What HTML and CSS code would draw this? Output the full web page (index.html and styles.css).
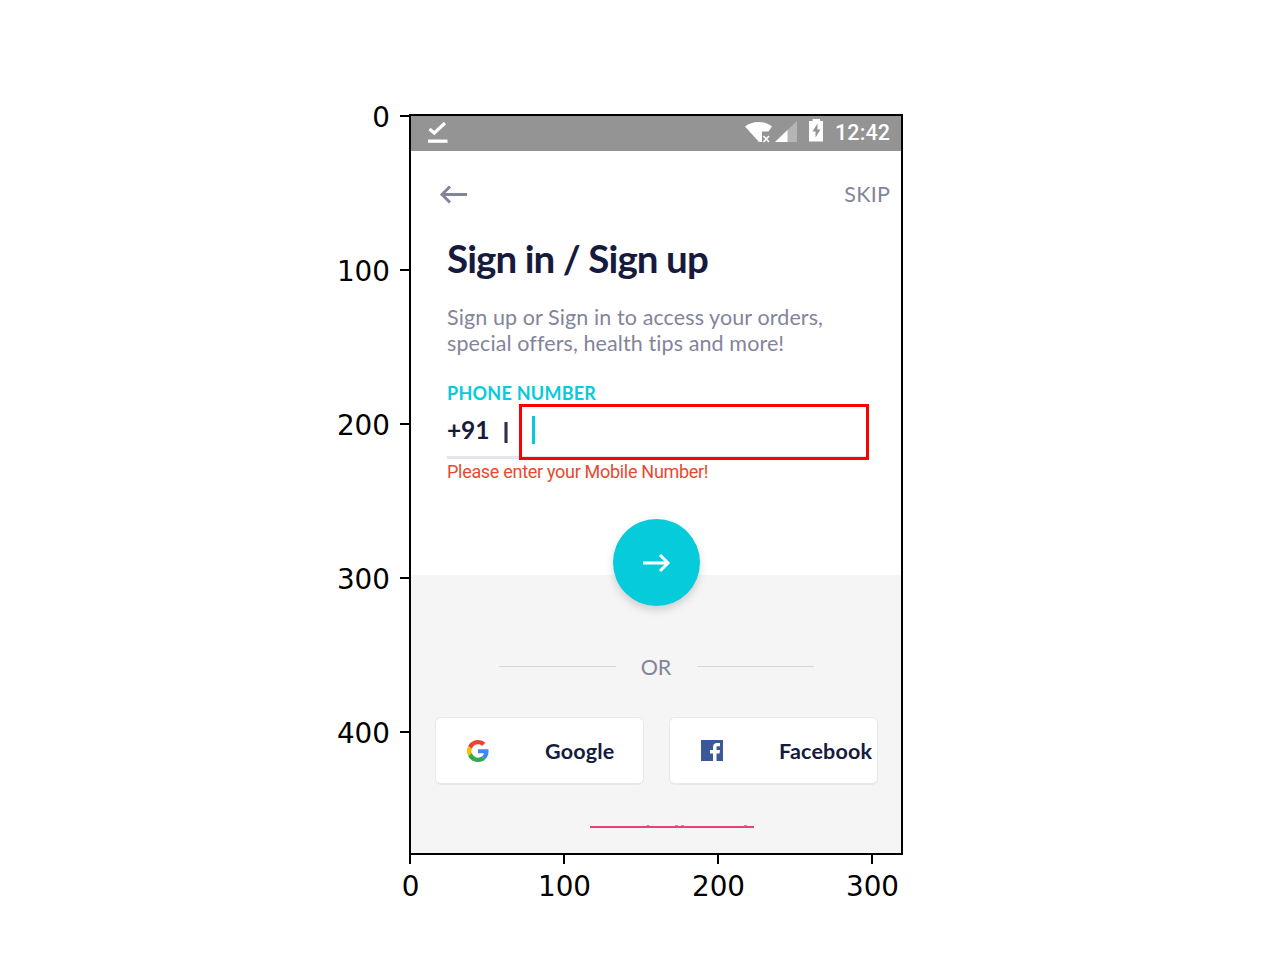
FILE: index.html
```html
<!DOCTYPE html>
<html lang="en">
<head>
<meta charset="utf-8">
<title>Sign in / Sign up</title>
<link rel="stylesheet" href="styles.css">
</head>
<body>
<main class="figure">
  <div class="y-axis">
    <div class="y-tick"><span>0</span></div>
    <div class="y-tick"><span>100</span></div>
    <div class="y-tick"><span>200</span></div>
    <div class="y-tick"><span>300</span></div>
    <div class="y-tick"><span>400</span></div>
  </div>
  <section class="screen">
    <header class="status">
      <svg class="status-check" width="22" height="24" viewBox="0 0 22 24"><path d="M2.500 9 7.300 13 18 3" fill="none" stroke="#fff" stroke-width="3.200"/><path d="M1 19.500h19.500v3.300H1z" fill="#fff"/></svg>
      <svg class="status-icons" width="82" height="26" viewBox="0 0 82 26">
        <path d="M0 8.500C7 2.500 20 2.500 27 8.500L23.500 13.500H17V24H14Z" fill="#fff"/>
        <path d="m18.500 18 5.500 6m0-6-5.500 6" stroke="#fff" stroke-width="1.700"/>
        <path d="M52 3v21H30Z" fill="#b5b5b5"/><path d="M42.500 12.100V24H30Z" fill="#fff"/>
        <path d="M64 3h3.500V1h7.500v2h3V23.500H64Z" fill="#fff"/>
        <path d="m72.500 5.500-5 8h3v6l5-8h-3Z" fill="#949494"/>
      </svg>
      <span class="clock">12:42</span>
    </header>
    <nav class="nav">
      <svg width="30" height="20" viewBox="0 0 30 20"><path d="M29 10.500H4M12 2.500l-8 8 8 8" fill="none" stroke="#83849a" stroke-width="3"/></svg>
      <span class="skip">SKIP</span>
    </nav>
    <div class="form">
      <h1 class="title">Sign in / Sign up</h1>
      <p class="intro">Sign up or Sign in to access your orders,<br>special offers, health tips and more!</p>
      <div class="label">PHONE NUMBER</div>
      <div class="field">
        <span class="code">+91</span><span class="bar"></span>
        <div class="entry"><span class="caret"></span></div>
      </div>
      <div class="error">Please enter your Mobile Number!</div>
    </div>
    <div class="social">
      <div class="go"><svg width="30" height="22" viewBox="0 0 30 22"><path d="M2 11H27.500M19 3l8 8-8 8" fill="none" stroke="#fff" stroke-width="3"/></svg></div>
      <div class="divider"><i></i><span>OR</span><i></i></div>
      <div class="buttons">
        <div class="button">
          <svg width="22" height="22" viewBox="0 0 48 48"><path fill="#ea4335" d="M24 9.500c3.540 0 6.710 1.220 9.210 3.600l6.850-6.850C35.900 2.380 30.470 0 24 0 14.620 0 6.510 5.380 2.560 13.220l7.980 6.190C12.430 13.720 17.740 9.500 24 9.500z"/><path fill="#4285f4" d="M46.980 24.550c0-1.570-.15-3.090-.38-4.550H24v9.020h12.940c-.58 2.960-2.260 5.480-4.780 7.180l7.730 6c4.510-4.180 7.090-10.360 7.090-17.650z"/><path fill="#fbbc05" d="M10.530 28.590A14.500 14.500 0 0 1 10.530 19.410L2.550 13.220a24 24 0 0 0 0 21.560z"/><path fill="#34a853" d="M24 48c6.480 0 11.930-2.130 15.890-5.810l-7.730-6c-2.150 1.450-4.920 2.300-8.160 2.300-6.260 0-11.570-4.220-13.470-9.910l-7.980 6.190C6.510 42.620 14.620 48 24 48z"/></svg>
          <span>Google</span>
        </div>
        <div class="button">
          <svg width="22" height="21" viewBox="0 0 22 21"><path fill="#3b5998" d="M0 0h22v21H0z"/><path fill="#fff" d="M12 21v-7.500H9V10h3V7.200C12 4.300 13.700 3 16 3h3v3.200h-2.200c-1 0-1.300.5-1.300 1.400V10H19l-.5 3.500h-3V21Z"/></svg>
          <span>Facebook</span>
        </div>
      </div>
      <svg class="link" width="164" height="4" viewBox="0 0 164 4"><path d="M0 1h164v2H0z" fill="#ec407a"/><path d="M56.500 0h3v1h-3zM85 0h3v1h-3zM91 0h3v1h-3zM154 0h3v1h-3z" fill="#ee7fa3"/></svg>
    </div>
  </section>
  <div class="x-axis">
    <div class="x-tick"><span>0</span></div>
    <div class="x-tick"><span>100</span></div>
    <div class="x-tick"><span>200</span></div>
    <div class="x-tick"><span>300</span></div>
  </div>
</main>
</body>
</html>
```

FILE: styles.css
```css
* { box-sizing: border-box; }
body { margin: 0; background: #fff; }
svg { display: block; flex: none; }
.figure {
  width: 1280px; height: 960px; padding-top: 114px;
  display: grid; grid-template-columns: 409px 494px; grid-template-rows: 741px 60px;
  overflow: hidden;
}
.y-axis, .x-axis { font: 27.8px/32px "DejaVu Sans", sans-serif; color: #000; }
.y-axis { margin-top: -13px; }
.y-tick { height: 154px; display: flex; justify-content: flex-end; align-items: flex-start; }
.y-tick span { margin-top: 1px; }
.y-tick::after { content: ""; width: 9px; height: 2px; background: #000; margin: 14px 0 0 10px; }
.x-axis { grid-column: 2; display: flex; margin-left: -76px; }
.x-tick { width: 154px; flex: none; display: flex; flex-direction: column; align-items: center; }
.x-tick::before { content: ""; width: 2px; height: 9px; background: #000; margin-bottom: 7px; }
.x-tick span { padding-left: 1px; }

.screen {
  border: 2px solid #000; display: flex; flex-direction: column;
  font-family: Lato, sans-serif; font-variant-ligatures: none; color: #161b3d; background: #fff; overflow: hidden;
}
.status { height: 35px; flex: none; background: #949494; display: flex; padding-left: 16px; }
.status-check { margin-top: 4px; }
.status-icons { margin: 2px 0 0 296px; }
.clock { font: 500 21.5px/34px Roboto, sans-serif; color: #fff; margin-left: 8px; letter-spacing: .1px; white-space: nowrap; }
.nav { height: 84px; flex: none; padding: 2px 11px 0 27px; display: flex; align-items: center; justify-content: space-between; }
.skip { font-size: 21.5px; line-height: 26px; letter-spacing: .2px; color: #83849a; }
.form { height: 340px; flex: none; padding: 0 33px 0 36px; }
.title { margin: 0; font-size: 38.5px; line-height: 46px; font-weight: 700; letter-spacing: -.9px; white-space: nowrap; }
.intro { margin: 23px 0 0; font-size: 21.5px; line-height: 26px; letter-spacing: .1px; color: #83849a; white-space: nowrap; }
.label { margin-top: 27px; font-size: 18px; line-height: 20px; font-weight: 700; letter-spacing: .25px; color: #06cbdb; white-space: nowrap; }
.field {
  margin-top: 1px; height: 56px; display: flex; align-items: flex-start;
  background: linear-gradient(#e5e6ea, #e5e6ea) 0 52px / 100% 3px no-repeat;
}
.code { width: 57px; font-size: 24.6px; line-height: 30px; margin-top: 11px; font-weight: 700; letter-spacing: -.2px; }
.bar { width: 4px; height: 21px; margin: 18px 11px 0 0; background: linear-gradient(90deg, #8b8d9f 1px, #2b2f50 1px 3px, #8b8d9f 3px); }
.entry { flex: 1; height: 56px; border: 3px solid #f00; padding: 9px 0 0 10px; margin-right: -1px; }
.caret { display: block; width: 3px; height: 28px; background: #06cbdb; }
.error { margin-top: 1px; font: 18px/22px Roboto, sans-serif; letter-spacing: -.3px; color: #e64a2e; white-space: nowrap; }
.social { flex: 1; background: #f5f5f5; display: flex; flex-direction: column; align-items: center; }
.go {
  width: 87px; height: 87px; border-radius: 50%; background: #06cbdb; flex: none;
  margin-top: -56px; display: flex; align-items: center; justify-content: center;
  box-shadow: 0 4px 9px rgba(0,0,0,.16);
}
.divider { margin-top: 48px; width: 315px; height: 26px; display: flex; align-items: center; justify-content: space-between; font-size: 21.5px; line-height: 26px; color: #83849a; }
.divider i { width: 117px; height: 1px; margin-bottom: 2px; background: #d5d6da; }
.buttons { margin-top: 37px; width: 443px; display: flex; justify-content: space-between; }
.button {
  width: 209px; height: 68px; background: #fff; border: 1px solid #e7e8eb; border-bottom-width: 2px; border-radius: 6px;
  display: flex; align-items: center; padding-left: 31px;
  font-size: 21.5px; line-height: 26px; font-weight: 700; letter-spacing: .2px; white-space: nowrap;
}
.button span { margin-left: 56.5px; }
.link { margin: 40px 0 0 31px; }
```
